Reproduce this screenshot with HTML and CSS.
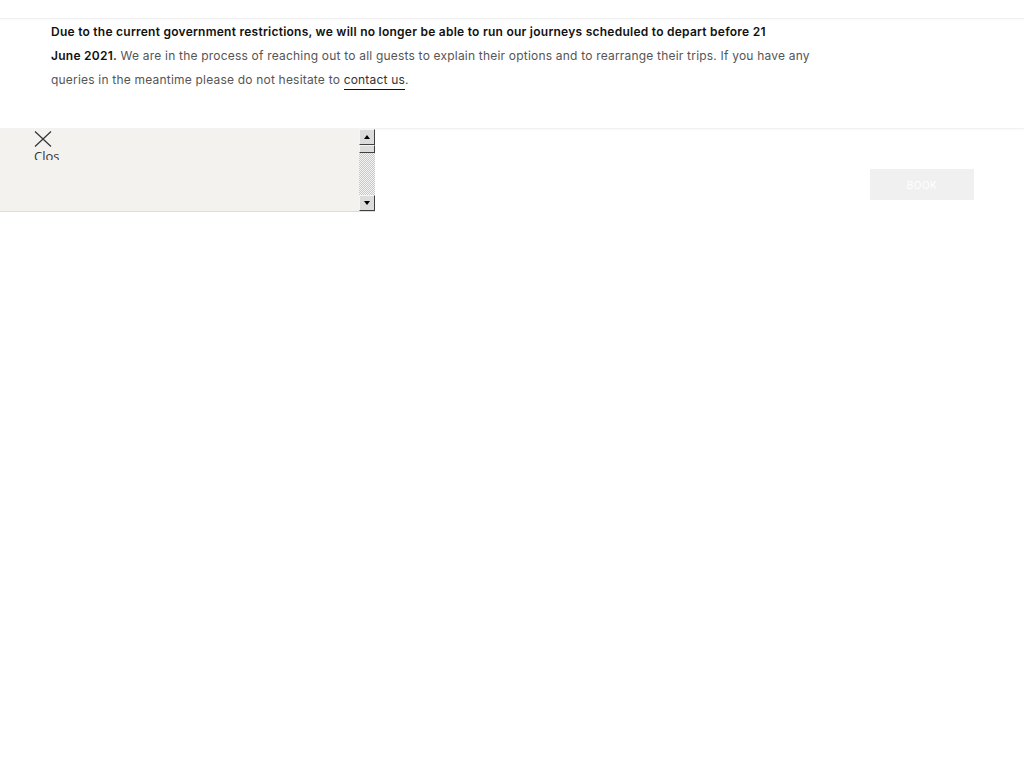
FILE: index.html
```html
<!DOCTYPE html>
<html lang="en">
<head>
<meta charset="utf-8">
<title>Notice</title>
<link rel="stylesheet" href="styles.css">
</head>
<body>
<header class="topbar"></header>
<section class="notice">
  <p class="notice-text"><strong>Due to the current government restrictions, we will no longer be able to run our journeys scheduled to depart before 21<br>June 2021.</strong> We are in the process of reaching out to all guests to explain their options and to rearrange their trips. If you have any<br>queries in the meantime please do not hesitate to <a class="notice-link" href="#">contact us</a>.</p>
</section>
<main class="main">
  <div class="frame">
    <div class="frame-content">
      <button class="close-btn" type="button">
        <svg class="close-icon" width="18" height="16" viewBox="0 0 18 16"><path d="M1 0.5 L17 15.5 M17 0.5 L1 15.5" stroke="#333" stroke-width="1.2" fill="none"/></svg>
        <span class="close-label">Close</span>
      </button>
    </div>
    <div class="scrollbar">
      <div class="sb-btn"><span class="arrow-up"></span></div>
      <div class="sb-thumb"></div>
      <div class="sb-track"></div>
      <div class="sb-btn"><span class="arrow-down"></span></div>
    </div>
  </div>
  <div class="book-wrap">
    <button class="book-btn" type="button">BOOK</button>
  </div>
</main>
</body>
</html>
```
FILE: styles.css
```css
html, body {
  margin: 0;
  padding: 0;
  background: #fff;
}
body {
  font-family: Inter, "Noto Sans", sans-serif;
}
.topbar {
  height: 18px;
  border-bottom: 1px solid #f0f0f0;
  box-shadow: 0 1px 2px rgba(0,0,0,0.03);
}
.notice {
  height: 109px;
  padding: 0 51px;
  border-bottom: 1px solid #f2f2f2;
  box-shadow: 0 1px 2px rgba(0,0,0,0.03);
}
.notice-text {
  margin: 0;
  padding-top: 1px;
  font-size: 12px;
  line-height: 24px;
  color: #555;
  letter-spacing: 0.2px;
}
.notice-text strong {
  font-weight: 600;
  color: #111;
  letter-spacing: 0.25px;
}
.notice-link {
  color: #333;
  text-decoration: none;
  border-bottom: 1px solid #111;
  padding-bottom: 2px;
}
.main {
  display: flex;
  align-items: flex-start;
}
.frame {
  display: flex;
  width: 375px;
  height: 82px;
  background: #f3f2ef;
  border-bottom: 1px solid #dcdcdc;
}
.frame-content {
  flex: 1;
  padding: 2px 0 0 34px;
}
.close-btn {
  display: flex;
  flex-direction: column;
  width: 25px;
  height: 29px;
  overflow: hidden;
  padding: 0;
  border: 0;
  background: none;
  font-family: "Open Sans", sans-serif;
  font-size: 13px;
  color: #333;
  line-height: 18px;
  text-align: left;
}
.close-icon {
  display: block;
  flex: none;
}
.close-label {
  display: block;
  white-space: nowrap;
}
.scrollbar {
  width: 16px;
  display: flex;
  flex-direction: column;
}
.sb-btn {
  height: 16px;
  background: #dcdcdc;
  border-top: 1px solid #f5f5f5;
  border-left: 1px solid #f5f5f5;
  border-right: 1px solid #404040;
  border-bottom: 1px solid #404040;
  box-sizing: border-box;
  display: flex;
  align-items: center;
  justify-content: center;
}
.arrow-up {
  width: 0;
  height: 0;
  border-left: 3px solid transparent;
  border-right: 3px solid transparent;
  border-bottom: 4px solid #000;
}
.arrow-down {
  width: 0;
  height: 0;
  border-left: 3px solid transparent;
  border-right: 3px solid transparent;
  border-top: 4px solid #000;
}
.sb-thumb {
  height: 8px;
  background: #dcdcdc;
  border-top: 1px solid #f5f5f5;
  border-left: 1px solid #f5f5f5;
  border-right: 1px solid #404040;
  border-bottom: 1px solid #404040;
  box-sizing: border-box;
}
.sb-track {
  flex: 1;
  background: repeating-conic-gradient(#c8c8c8 0 25%, #f4f4f4 0 50%) 0 0 / 2px 2px;
}
.book-wrap {
  flex: 1;
  display: flex;
  justify-content: flex-end;
  padding: 40px 50px 0 0;
}
.book-btn {
  width: 104px;
  height: 31px;
  border: 0;
  background: #f0f0f0;
  color: #fff;
  font-family: Inter, sans-serif;
  font-size: 10px;
  letter-spacing: 0.5px;
  padding: 0;
}
```
